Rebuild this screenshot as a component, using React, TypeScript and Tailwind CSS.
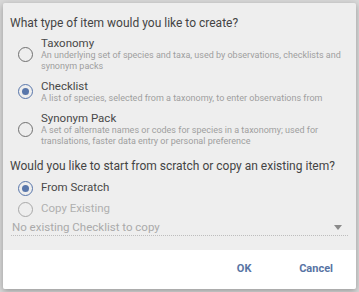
import { useState } from 'react';

interface ItemType {
  id: string;
  label: string;
  lines: string[];
}

const itemTypes: ItemType[] = [
  {
    id: 'taxonomy',
    label: 'Taxonomy',
    lines: [
      'An underlying set of species and taxa, used by observations, checklists and',
      'synonym packs'
    ]
  },
  {
    id: 'checklist',
    label: 'Checklist',
    lines: ['A list of species, selected from a taxonomy, to enter observations from']
  },
  {
    id: 'synonym',
    label: 'Synonym Pack',
    lines: [
      'A set of alternate names or codes for species in a taxonomy; used for',
      'translations, faster data entry or personal preference'
    ]
  }
];

function Radio({ checked, disabled }: { checked: boolean; disabled?: boolean }) {
  return (
    <div
      className={`w-[15px] h-[15px] rounded-full border-[1.5px] flex items-center justify-center shrink-0 ${
        checked ? 'border-[#5876ab]' : disabled ? 'border-[#a8a8a8]' : 'border-[#707070]'
      }`}
    >
      {checked && <div className="w-[7px] h-[7px] rounded-full bg-[#5876ab]" />}
    </div>
  );
}

export default function App() {
  const [type, setType] = useState('checklist');
  const [mode, setMode] = useState('scratch');

  return (
    <div className="w-[359px] h-[292px] bg-[#d8d8d8] p-[3px] font-['Roboto',sans-serif]">
      <div className="w-[353px] h-[286px] rounded-[2px] overflow-hidden flex flex-col shadow-[0_2px_6px_rgba(0,0,0,0.3)]">
        {/* Body */}
        <div className="flex-1 bg-[#eeeeee] pl-[7px] pr-[8px] pt-[13px]">
          <h2 className="text-[12px] leading-[15px] text-[#444] whitespace-nowrap">
            What type of item would you like to create?
          </h2>

          <div className="mt-[5px] flex flex-col gap-[7px]">
            {itemTypes.map((item) => (
              <div
                key={item.id}
                className="flex items-center gap-[8px] pl-[8px] cursor-pointer"
                onClick={() => setType(item.id)}
              >
                <Radio checked={type === item.id} />
                <div>
                  <div className="text-[11.5px] leading-[14px] text-[#484848]">{item.label}</div>
                  {item.lines.map((line, i) => (
                    <div key={i} className="text-[9px] leading-[11px] text-[#9e9e9e] whitespace-nowrap">
                      {line}
                    </div>
                  ))}
                </div>
              </div>
            ))}
          </div>

          <h2 className="mt-[12px] text-[12px] leading-[15px] text-[#444] whitespace-nowrap">
            Would you like to start from scratch or copy an existing item?
          </h2>

          <div className="mt-[6px] flex flex-col gap-[5px]">
            <div className="flex items-center gap-[8px] pl-[8px] h-[16px]" onClick={() => setMode('scratch')}>
              <Radio checked={mode === 'scratch'} />
              <span className="text-[11.5px] text-[#484848]">From Scratch</span>
            </div>
            <div className="flex items-center gap-[8px] pl-[8px] h-[16px]">
              <Radio checked={false} disabled />
              <span className="text-[11.5px] text-[#b0b0b0]">Copy Existing</span>
            </div>
          </div>

          <div className="mt-[3px] ml-[1px] flex items-center justify-between border-b border-dotted border-[#bdbdbd] pb-[1px]">
            <span className="text-[11.5px] leading-[14px] text-[#aaaaaa] pl-[1px]">No existing Checklist to copy</span>
            <svg width="8" height="5" viewBox="0 0 8 5" className="mr-[6px]">
              <path d="M0 0 L8 0 L4 5 Z" fill="#8a8a8a" />
            </svg>
          </div>
        </div>

        {/* Footer */}
        <div className="h-[39px] bg-white flex items-center justify-end pr-[23px]">
          <button className="w-[40px] text-[11px] font-bold text-[#5874a4] mr-[35px]">OK</button>
          <button className="text-[11px] font-bold text-[#5874a4]">Cancel</button>
        </div>
      </div>
    </div>
  );
}
